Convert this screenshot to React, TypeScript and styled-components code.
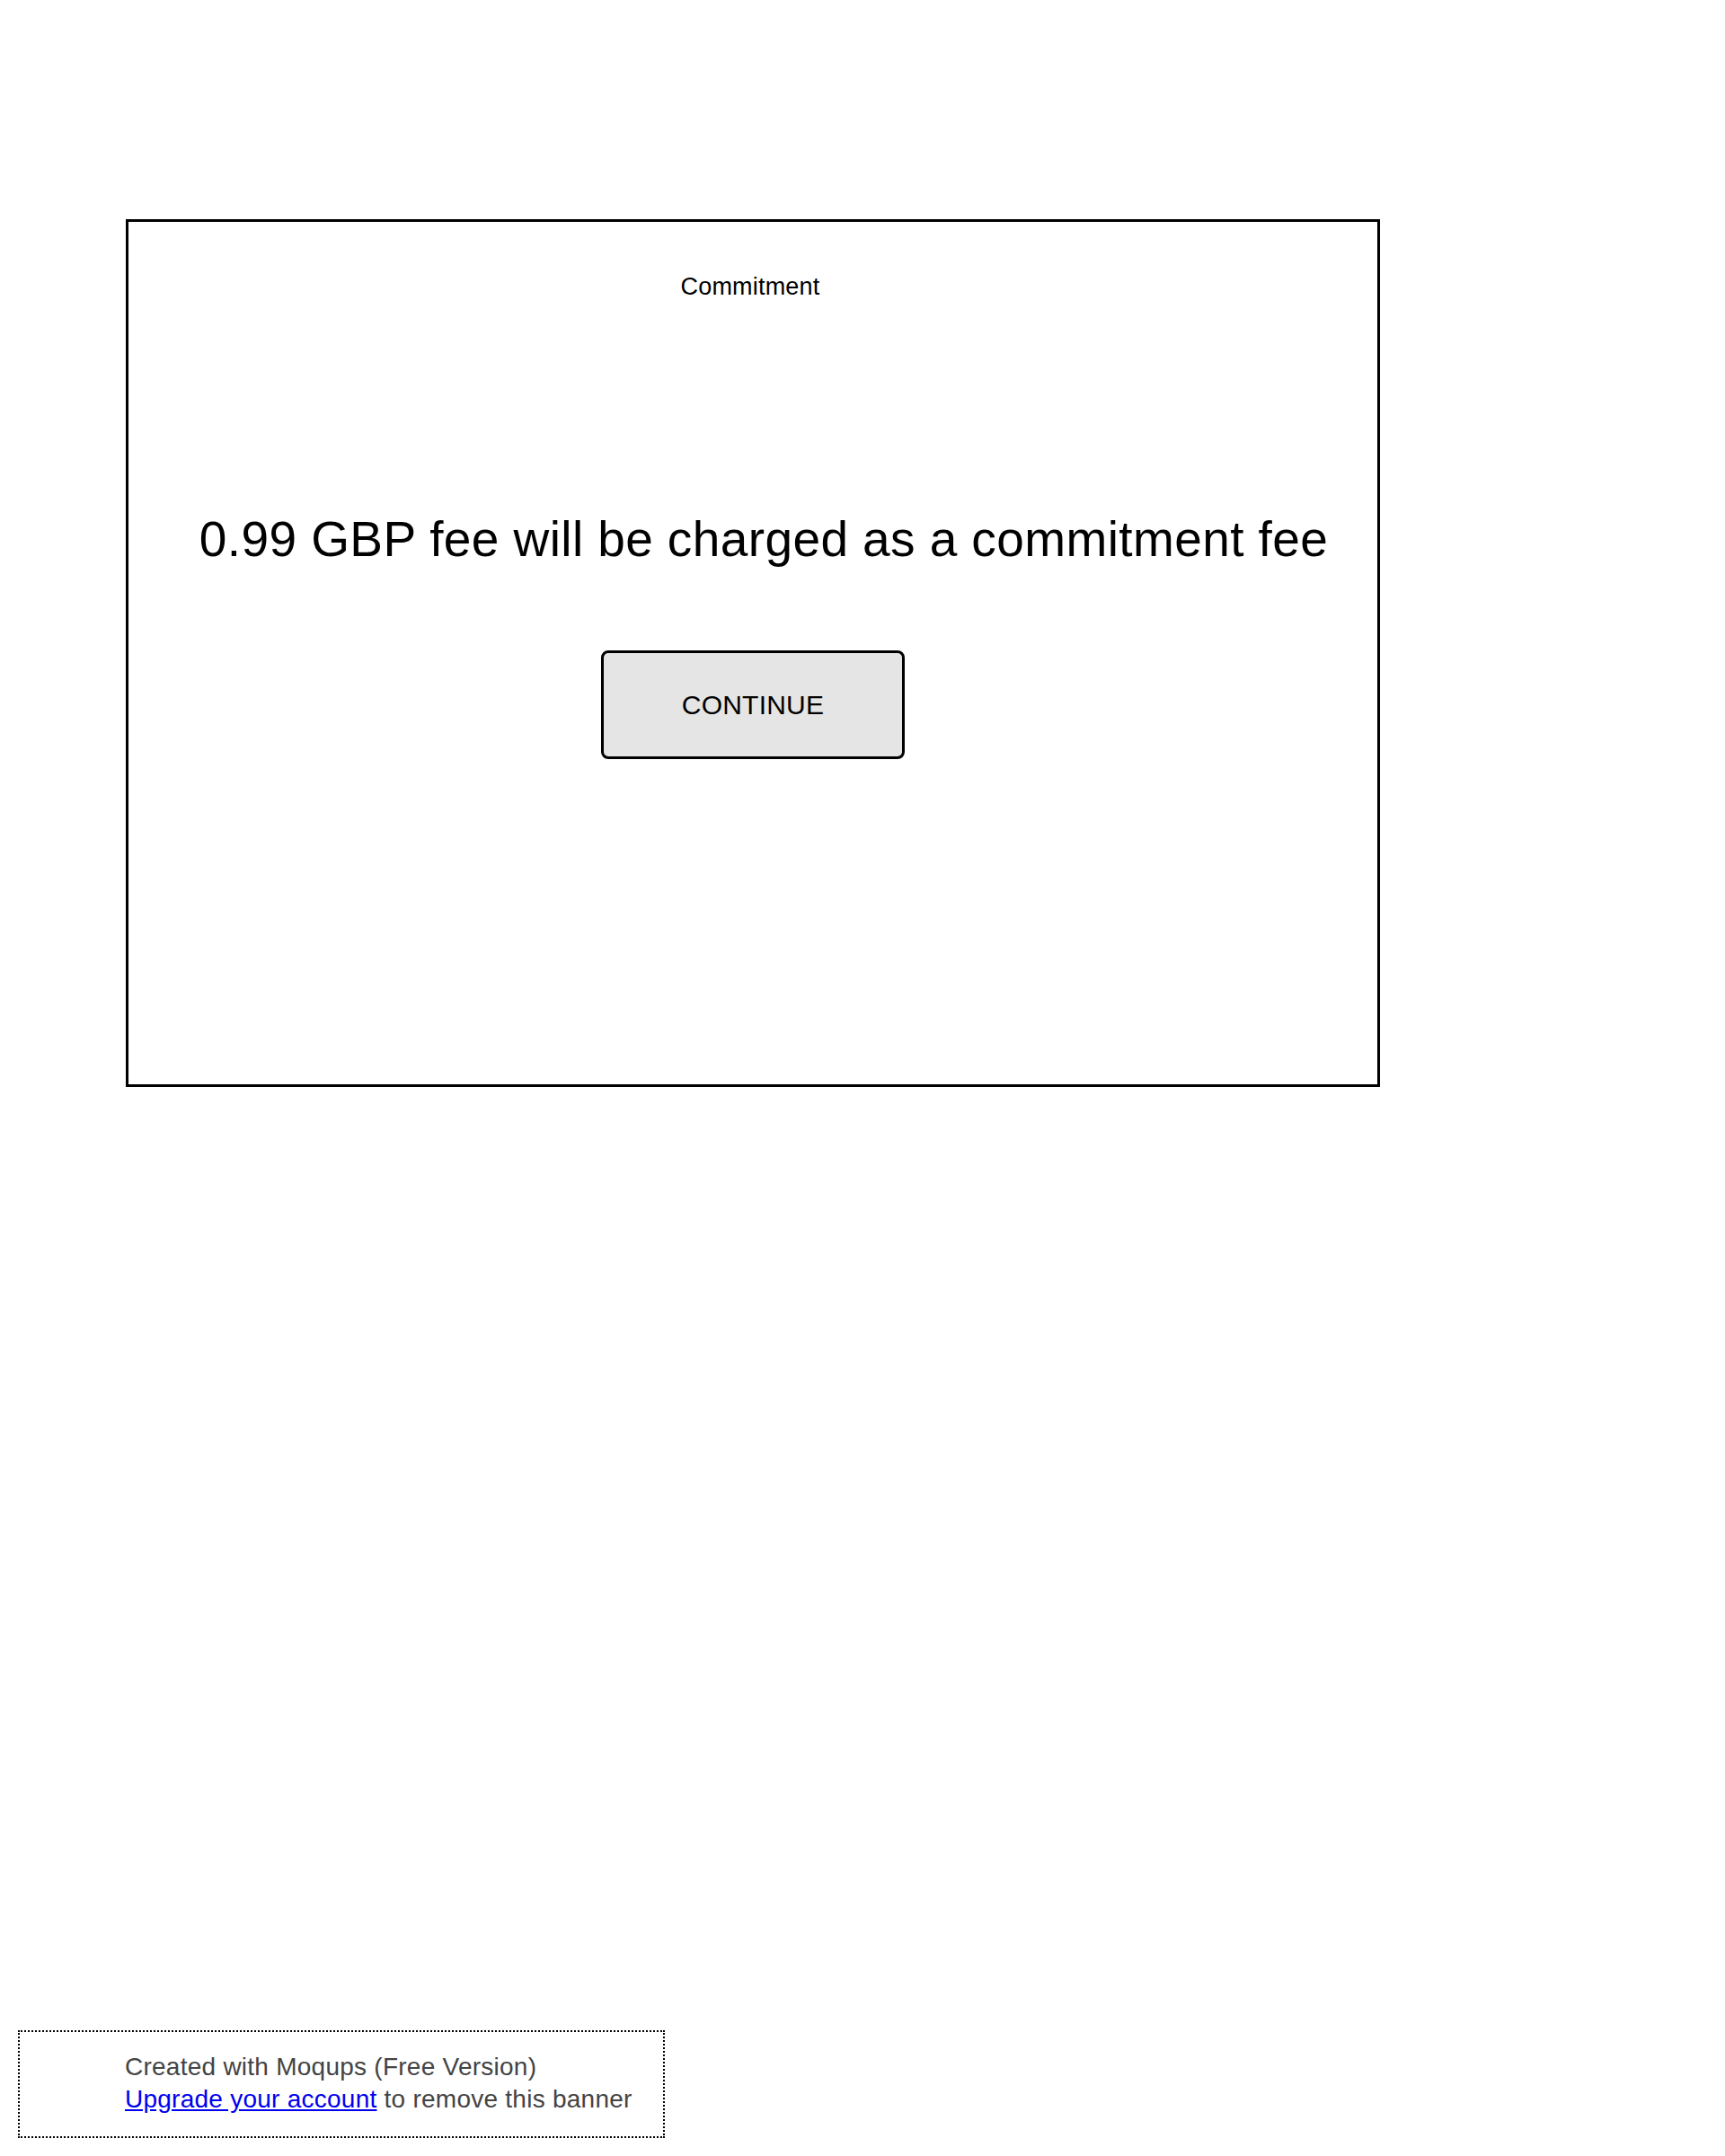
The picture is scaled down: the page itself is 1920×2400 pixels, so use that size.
import React from "react";
import styled, { createGlobalStyle } from "styled-components";

const GlobalStyle = createGlobalStyle`
  html, body {
    margin: 0;
    padding: 0;
    background: #ffffff;
    font-family: "Liberation Sans", Arial, sans-serif;
  }
  * { box-sizing: border-box; }
`;

const Page = styled.div`
  min-height: 2400px;
  display: flex;
  flex-direction: column;
  align-items: flex-start;
  padding: 244px 0 20px 0;
`;

const Frame = styled.section`
  margin-left: 140px;
  width: 1396px;
  height: 966px;
  border: 3px solid #000;
  display: flex;
  flex-direction: column;
  align-items: center;
  padding-top: 56px;
`;

const Title = styled.div`
  font-size: 27px;
  line-height: 32px;
  letter-spacing: 0.2px;
  color: #000;
  padding-right: 6px;
`;

const Message = styled.div`
  margin-top: 234px;
  font-size: 55px;
  line-height: 62px;
  color: #000;
  letter-spacing: 0.4px;
  padding-left: 24px;
  white-space: nowrap;
`;

const ContinueButton = styled.button`
  margin-top: 93px;
  width: 338px;
  height: 121px;
  border: 3px solid #000;
  border-radius: 8px;
  background: #e5e5e5;
  font-family: "Liberation Sans", Arial, sans-serif;
  font-size: 30px;
  letter-spacing: 0.2px;
  color: #000;
  display: flex;
  align-items: center;
  justify-content: center;
  padding: 0;
  cursor: pointer;
`;

const Banner = styled.div`
  margin-top: auto;
  margin-left: 20px;
  width: 720px;
  height: 120px;
  border: 2px dotted #000;
  padding: 21px 0 0 117px;
  font-size: 28px;
  line-height: 36px;
  letter-spacing: 0.25px;
  color: #444;
`;

const BannerLine = styled.div`
  white-space: nowrap;
`;

const UpgradeLink = styled.a`
  color: #0000ee;
  text-decoration: underline;
`;

export default function App() {
  return (
    <>
      <GlobalStyle />
      <Page>
        <Frame>
          <Title>Commitment</Title>
          <Message>0.99 GBP fee will be charged as a commitment fee</Message>
          <ContinueButton type="button">CONTINUE</ContinueButton>
        </Frame>
        <Banner>
          <BannerLine>Created with Moqups (Free Version)</BannerLine>
          <BannerLine>
            <UpgradeLink href="#">Upgrade your account</UpgradeLink> to remove this banner
          </BannerLine>
        </Banner>
      </Page>
    </>
  );
}
